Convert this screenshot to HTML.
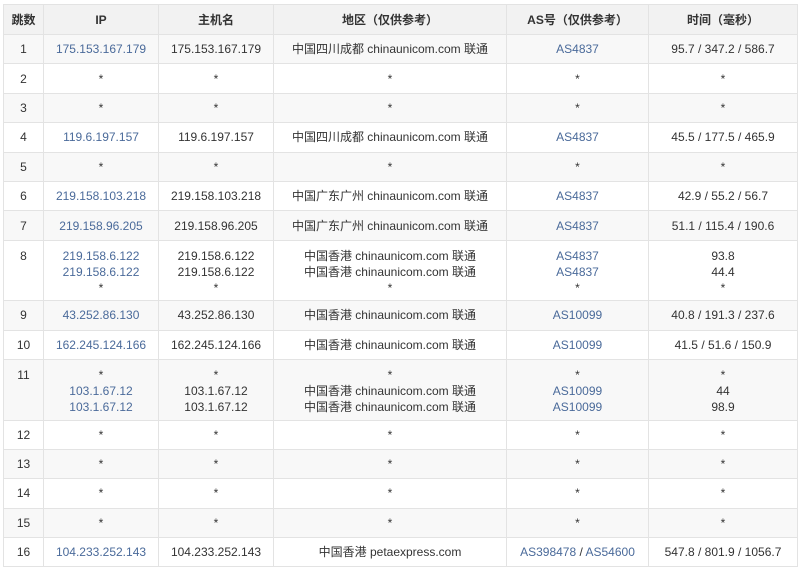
<!DOCTYPE html>
<html><head><meta charset="utf-8"><style>
html,body{margin:0;padding:0;background:#fff;width:800px;height:572px;overflow:hidden}
table{position:absolute;left:3px;top:4px;border-collapse:collapse;font-family:"Liberation Sans","Noto Sans CJK SC",sans-serif;font-size:12px;color:#333;table-layout:fixed;width:794px}
td,th{border:1px solid #e3e3e3;text-align:center;padding:0;line-height:16px;vertical-align:middle}
th{background:#f2f2f2;font-weight:bold;height:29px;color:#333}
td{height:28.4px}
tr.s td{background:#f8f8f8}
td.m{height:60.5px;vertical-align:top;padding-top:7px;box-sizing:border-box}
a{color:#4a6a9a;text-decoration:none}
</style></head><body>
<table>
<colgroup><col style="width:40px"><col style="width:115px"><col style="width:115px"><col style="width:233px"><col style="width:142px"><col style="width:149px"></colgroup>
<tr><th>跳数</th><th>IP</th><th>主机名</th><th>地区（仅供参考）</th><th>AS号（仅供参考）</th><th>时间（毫秒）</th></tr>
<tr class="s"><td>1</td><td><a>175.153.167.179</a></td><td>175.153.167.179</td><td>中国四川成都 chinaunicom.com 联通</td><td><a>AS4837</a></td><td>95.7 / 347.2 / 586.7</td></tr>
<tr><td>2</td><td>*</td><td>*</td><td>*</td><td>*</td><td>*</td></tr>
<tr class="s"><td>3</td><td>*</td><td>*</td><td>*</td><td>*</td><td>*</td></tr>
<tr><td>4</td><td><a>119.6.197.157</a></td><td>119.6.197.157</td><td>中国四川成都 chinaunicom.com 联通</td><td><a>AS4837</a></td><td>45.5 / 177.5 / 465.9</td></tr>
<tr class="s"><td>5</td><td>*</td><td>*</td><td>*</td><td>*</td><td>*</td></tr>
<tr><td>6</td><td><a>219.158.103.218</a></td><td>219.158.103.218</td><td>中国广东广州 chinaunicom.com 联通</td><td><a>AS4837</a></td><td>42.9 / 55.2 / 56.7</td></tr>
<tr class="s"><td>7</td><td><a>219.158.96.205</a></td><td>219.158.96.205</td><td>中国广东广州 chinaunicom.com 联通</td><td><a>AS4837</a></td><td>51.1 / 115.4 / 190.6</td></tr>
<tr><td class="m">8</td><td class="m"><a>219.158.6.122</a><br><a>219.158.6.122</a><br>*</td><td class="m">219.158.6.122<br>219.158.6.122<br>*</td><td class="m">中国香港 chinaunicom.com 联通<br>中国香港 chinaunicom.com 联通<br>*</td><td class="m"><a>AS4837</a><br><a>AS4837</a><br>*</td><td class="m">93.8<br>44.4<br>*</td></tr>
<tr class="s"><td>9</td><td><a>43.252.86.130</a></td><td>43.252.86.130</td><td>中国香港 chinaunicom.com 联通</td><td><a>AS10099</a></td><td>40.8 / 191.3 / 237.6</td></tr>
<tr><td>10</td><td><a>162.245.124.166</a></td><td>162.245.124.166</td><td>中国香港 chinaunicom.com 联通</td><td><a>AS10099</a></td><td>41.5 / 51.6 / 150.9</td></tr>
<tr class="s"><td class="m">11</td><td class="m">*<br><a>103.1.67.12</a><br><a>103.1.67.12</a></td><td class="m">*<br>103.1.67.12<br>103.1.67.12</td><td class="m">*<br>中国香港 chinaunicom.com 联通<br>中国香港 chinaunicom.com 联通</td><td class="m">*<br><a>AS10099</a><br><a>AS10099</a></td><td class="m">*<br>44<br>98.9</td></tr>
<tr><td>12</td><td>*</td><td>*</td><td>*</td><td>*</td><td>*</td></tr>
<tr class="s"><td>13</td><td>*</td><td>*</td><td>*</td><td>*</td><td>*</td></tr>
<tr><td>14</td><td>*</td><td>*</td><td>*</td><td>*</td><td>*</td></tr>
<tr class="s"><td>15</td><td>*</td><td>*</td><td>*</td><td>*</td><td>*</td></tr>
<tr><td>16</td><td><a>104.233.252.143</a></td><td>104.233.252.143</td><td>中国香港 petaexpress.com</td><td><a>AS398478</a> / <a>AS54600</a></td><td>547.8 / 801.9 / 1056.7</td></tr>
</table>
</body></html>
